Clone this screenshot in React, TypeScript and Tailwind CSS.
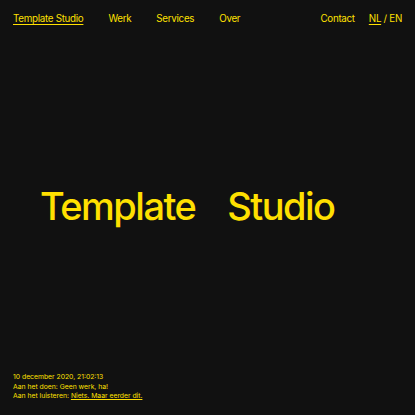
export default function App() {
  return (
    <div className="flex h-[415px] w-[415px] flex-col bg-[#111111] px-[13px] text-[#ffe000] font-['Inter','Liberation_Sans',sans-serif]">
      {/* Navigation */}
      <header className="flex items-center justify-between pt-[12px] text-[9.8px] leading-[14px] tracking-[-0.03em]">
        <nav className="flex gap-[25px]">
          <a className="underline decoration-1 underline-offset-2">Template Studio</a>
          <a>Werk</a>
          <a>Services</a>
          <a>Over</a>
        </nav>
        <div className="flex gap-[14px]">
          <a>Contact</a>
          <span>
            <a className="underline decoration-1 underline-offset-2">NL</a> / <a>EN</a>
          </span>
        </div>
      </header>

      {/* Hero */}
      <main className="flex flex-1 items-center pl-[27px] pt-[14px]">
        <h1 className="flex gap-[32px] text-[38px] font-medium leading-none tracking-[-0.04em]">
          <span>Template</span>
          <span>Studio</span>
        </h1>
      </main>

      {/* Status */}
      <footer className="pb-[14px] text-[6.8px] leading-[9.6px]">
        <p>10 december 2020, 21:02:13</p>
        <p>Aan het doen: Geen werk, ha!</p>
        <p>
          Aan het luisteren: <a className="underline decoration-1 underline-offset-1">Niets. Maar eerder dit.</a>
        </p>
      </footer>
    </div>
  );
}
